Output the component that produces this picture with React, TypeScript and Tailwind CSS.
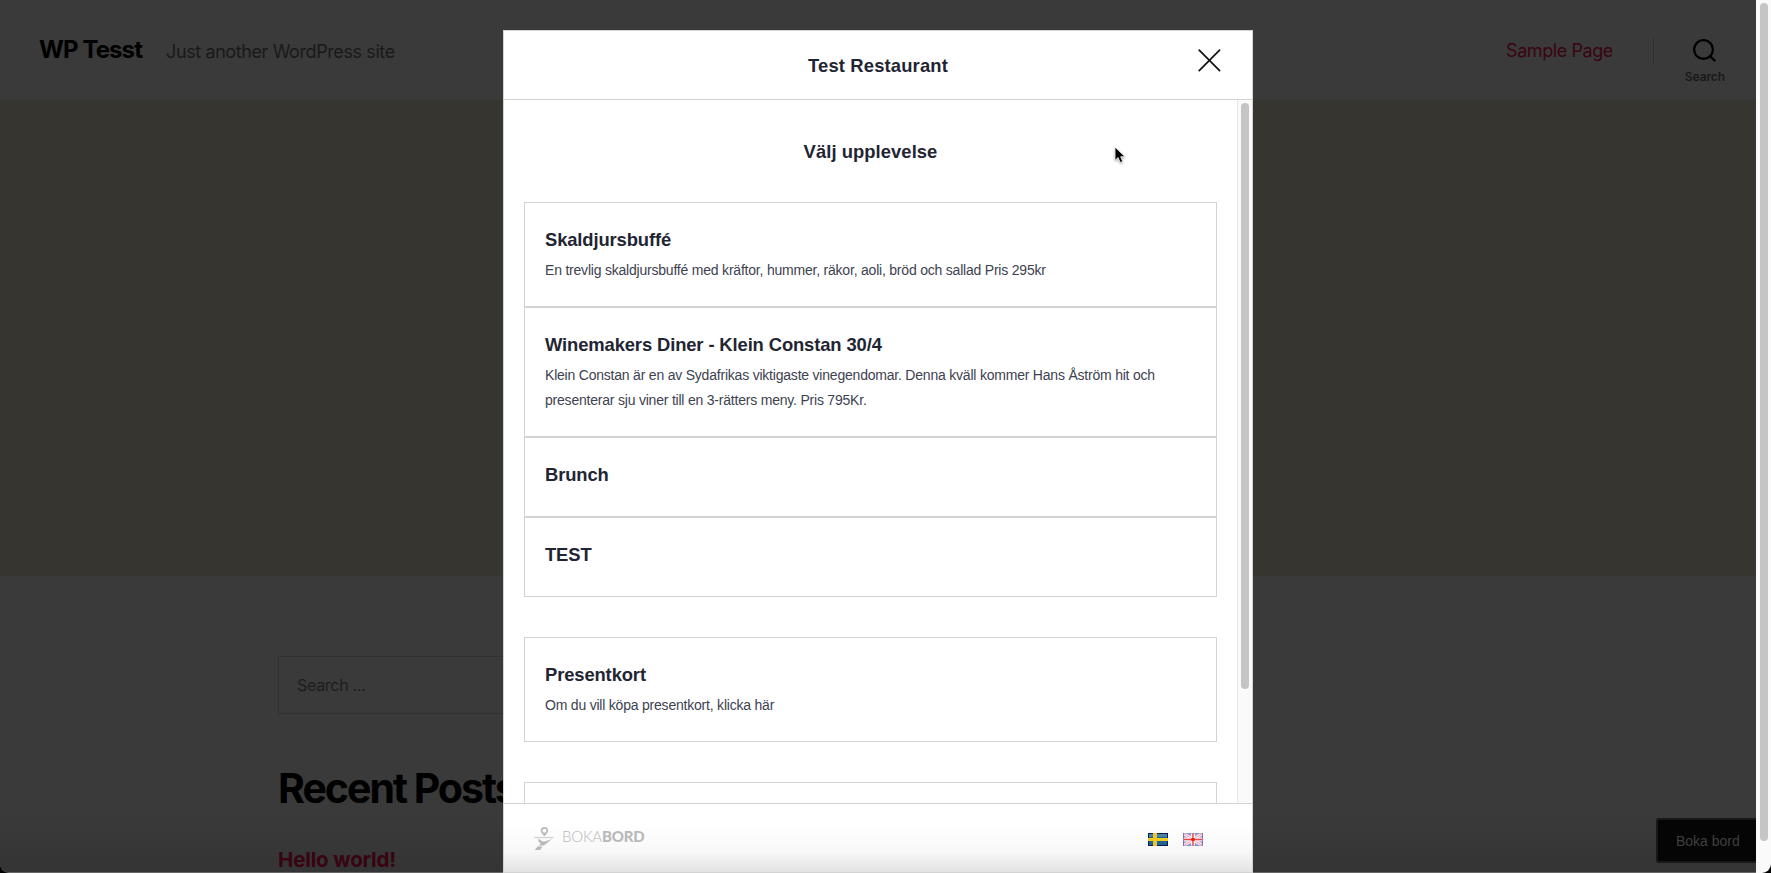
import React from "react";

type Experience = { title: string; lines?: string[]; size: string };

const experiences: Experience[] = [
  {
    title: "Skaldjursbuffé",
    lines: ["En trevlig skaldjursbuffé med kräftor, hummer, räkor, aoli, bröd och sallad Pris 295kr"],
    size: "h-[105px]",
  },
  {
    title: "Winemakers Diner - Klein Constan 30/4",
    lines: [
      "Klein Constan är en av Sydafrikas viktigaste vinegendomar. Denna kväll kommer Hans Åström hit och",
      "presenterar sju viner till en 3-rätters meny. Pris 795Kr.",
    ],
    size: "h-[130px]",
  },
  { title: "Brunch", size: "h-20" },
  { title: "TEST", size: "h-20" },
];

function Card({ title, lines = [], size }: Experience) {
  return (
    <div className={`shrink-0 border border-[#d3d3d3] px-5 pt-[25px] ${size}`}>
      <h3 className="text-[18.4px] leading-6 font-bold tracking-[-0.12px] whitespace-nowrap">{title}</h3>
      <div className="pt-[6px]">
        {lines.map((line) => (
          <p key={line} className="text-[14px] leading-[25px] tracking-[-0.21px] whitespace-nowrap text-[#3d4250]">
            {line}
          </p>
        ))}
      </div>
    </div>
  );
}

function SwedishFlag() {
  return (
    <svg width="20" height="13" viewBox="0 0 20 13">
      <rect width="20" height="13" fill="#0b1d4e" />
      <rect x="1" y="1" width="18" height="11" fill="#1d6394" />
      <rect x="1" y="1" width="18" height="3" fill="#4684a5" />
      <rect x="5" width="4" height="13" fill="#ecc52c" />
      <rect y="5" width="20" height="3" fill="#f4c91f" />
    </svg>
  );
}

function BritishFlag() {
  return (
    <svg width="20" height="13" viewBox="0 0 20 13">
      <rect width="20" height="13" fill="#8f98e0" />
      <path d="M0 0L20 13M20 0L0 13" stroke="#fbe9ee" strokeWidth="3.2" />
      <path d="M0 0L20 13M20 0L0 13" stroke="#f59a9c" strokeWidth="1" />
      <path d="M10 0V13M0 6.5H20" stroke="#fdeef0" strokeWidth="4" />
      <path d="M10 0V13M1 6.5H19" stroke="#f04a46" strokeWidth="1.5" />
      <path d="M8 6.5H12M10 5V8" stroke="#e8201c" strokeWidth="2.2" />
      <path d="M0 .5H20M0 12.5H20" stroke="#7c80bd" strokeOpacity=".4" />
      <path d="M.5 0V13M19.5 0V13" stroke="#5c62a4" strokeOpacity=".75" />
    </svg>
  );
}

function LogoMark() {
  return (
    <svg width="20" height="24" viewBox="0 0 20 24" fill="#b9b9b9">
      <path
        fillRule="evenodd"
        d="M10.4 0a3.7 3.7 0 0 1 3.7 3.7C14.1 6.2 11.3 7.4 10.4 9.6C9.5 7.4 6.7 6.2 6.7 3.7A3.7 3.7 0 0 1 10.4 0ZM10.4 1.7a2 2 0 1 0 0 4a2 2 0 0 0 0-4Z"
      />
      <rect y="9.9" width="19.5" height="1.3" fill="#d2d2d2" />
      <path d="M3.8 12.2L6 12.6L8.2 14.4L11 14.4L18 12L13.8 15.6L9.8 18.6L4.4 18.6L7.2 16.6L5.2 15.6Z" />
      <path d="M3.6 19.4L8.4 19.4L6.2 23L0.8 23Z" />
    </svg>
  );
}

function Modal() {
  return (
    <section className="absolute top-[30px] left-[503px] flex h-[843px] w-[750px] flex-col border border-[#d3d3d3] bg-white text-[#1f2533] [font-family:'Liberation_Sans',Arial,sans-serif]">
      <header className="relative flex h-[69px] shrink-0 items-center justify-center border-b border-[#d3d3d3] pt-px">
        <h1 className="text-[18.4px] font-bold tracking-[0.15px]">Test Restaurant</h1>
        <button aria-label="Stäng" className="absolute top-[18px] right-[31px]">
          <svg width="23" height="23" viewBox="0 0 23 23" stroke="#111" strokeWidth="1.7" strokeLinecap="round">
            <path d="M1.2 1.2L21.6 21.6M21.6 1.2L1.2 21.6" />
          </svg>
        </button>
      </header>
      <div className="flex h-[703px] shrink-0 overflow-hidden">
        <div className="flex flex-1 flex-col px-5">
          <h2 className="mt-10 mb-[38px] text-center text-[18.4px] leading-6 font-bold tracking-[0.06px]">Välj upplevelse</h2>
          {experiences.map((item) => (
            <Card key={item.title} {...item} />
          ))}
          <div className="h-10 shrink-0" />
          <Card title="Presentkort" lines={["Om du vill köpa presentkort, klicka här"]} size="h-[105px]" />
          <div className="mt-10 h-[105px] shrink-0 border border-[#d3d3d3]" />
        </div>
        <div className="w-[15px] border-l border-[#e6e6e6] bg-[#fafafa] pt-[3px] pl-[3px]">
          <div className="h-[586px] w-2 rounded-full bg-[#c5c5c5]" />
        </div>
      </div>
      <footer className="flex flex-1 justify-between border-t border-[#d3d3d3] bg-linear-to-b from-white from-30% via-[#f8f8f8] via-70% to-[#e3e3e3] pr-[49px] pl-[30px]">
        <div className="flex h-[47px] items-end">
          <LogoMark />
          <span className="ml-2 flex h-[29px] items-center text-[15px] tracking-[-0.18px] text-[#b9b9b9] [font-family:Lato,sans-serif]">
            <span className="font-light">BOKA</span>
            <span className="font-black">BORD</span>
          </span>
        </div>
        <div className="flex gap-[15px] pt-[29px]">
          <SwedishFlag />
          <BritishFlag />
        </div>
      </footer>
    </section>
  );
}

export default function App() {
  return (
    <div className="relative flex h-[873px] w-[1771px] overflow-hidden bg-black [font-family:Inter,sans-serif]">
      <main className="flex w-[1756px] flex-col overflow-hidden rounded-bl-[9px] border-b border-[#666] bg-[#3a3a3a]">
        <header className="flex h-[100px] shrink-0 items-center pl-[39px]">
          <span className="text-[24px] font-bold tracking-[-0.9px] text-black">WP Tesst</span>
          <span className="mt-[3px] ml-6 text-[18px] tracking-[-0.4px] text-[#191919]">Just another WordPress site</span>
          <nav className="ml-auto flex items-center">
            <a className="text-[18px] tracking-[-0.43px] text-[#380411]">Sample Page</a>
            <span className="ml-10 h-[27px] w-px bg-[#303030]" />
            <span className="mt-6 mr-[31px] ml-[31px] flex flex-col items-center">
              <svg width="23" height="23" viewBox="0 0 23 23" fill="none" stroke="#000" strokeWidth="2.3">
                <circle cx="10.5" cy="10.5" r="9.4" />
                <path d="M17 17L22.2 22.2" />
              </svg>
              <span className="mt-[7px] text-[12px] leading-4 font-semibold tracking-[-0.1px] text-[#191919]">Search</span>
            </span>
          </nav>
        </header>
        <div className="h-[476px] shrink-0 bg-[#373530]" />
        <div className="flex flex-1 flex-col bg-linear-to-b from-[#3a3a3a] from-80% to-[#343434] pt-20 pl-[278px]">
          <div className="flex h-[58px] w-[900px] shrink-0 items-center border border-[#313131] pl-[18px] text-[16px] tracking-[-0.3px] text-[#1d1d1d]">
            Search ...
          </div>
          <h2 className="mt-[49px] text-[41px] leading-[50px] font-bold tracking-[-2px] whitespace-nowrap text-black">Recent Posts</h2>
          <a className="mt-[33px] text-[20.5px] leading-7 font-bold tracking-[-0.15px] text-[#380411]">Hello world!</a>
        </div>
      </main>
      <aside className="w-[15px] rounded-br-[9px] bg-[#fafafa] pt-[3px] pl-1">
        <div className="h-[838px] w-2 rounded-full bg-[#c5c5c5]" />
      </aside>
      <button className="absolute top-[818px] left-[1656px] flex h-[45px] w-[100px] items-center rounded-l-[3px] border-2 border-r-0 border-[#181818] bg-[#050505] pt-px pl-[18px] text-[14px] text-[#3f3f3f] [font-family:'Liberation_Sans',Arial,sans-serif]">
        Boka bord
      </button>
      <Modal />
      <svg className="absolute top-[145px] left-[1113px] drop-shadow-[0_1px_1px_rgba(0,0,0,0.35)]" width="14" height="20" viewBox="0 0 14 20">
        <path d="M2 2V15.5L5.1 12.6L7.2 17.5L9.7 16.4L7.7 11.7H12Z" fill="#000" stroke="#fff" strokeWidth="0.8" />
      </svg>
    </div>
  );
}
